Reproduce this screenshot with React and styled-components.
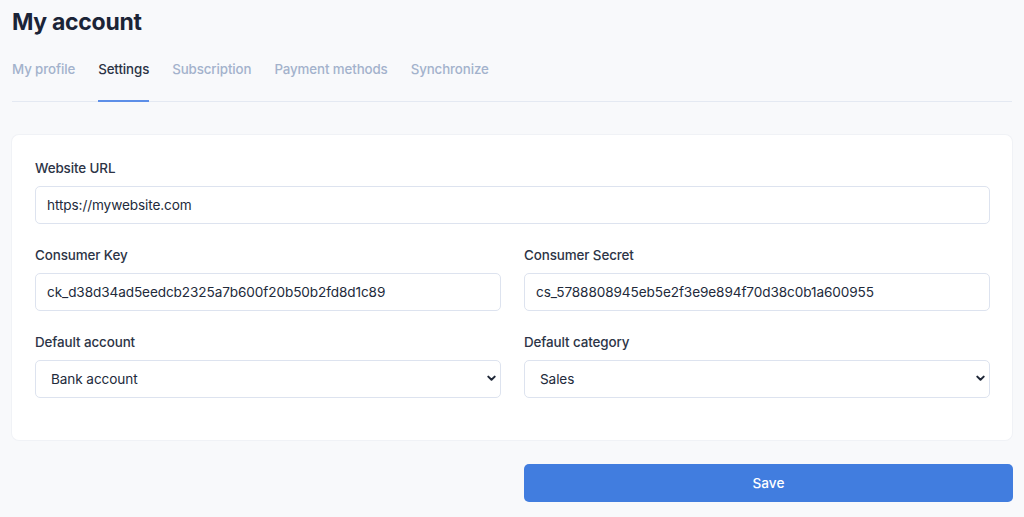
import React from 'react'
import styled, { createGlobalStyle } from 'styled-components'

const GlobalStyle = createGlobalStyle`
  html, body {
    margin: 0;
    padding: 0;
    background: #f8f9fb;
    font-family: Inter, "Noto Sans", sans-serif;
    -webkit-font-smoothing: antialiased;
  }
`;

const Page = styled.div`
  padding: 8px 11px 0 12px;
  display: flex;
  flex-direction: column;
`;

const Title = styled.h1`
  margin: 0;
  font-size: 23px;
  font-weight: 700;
  color: #1b2437;
  letter-spacing: -0.3px;
  line-height: 29px;
`;

const Tabs = styled.nav`
  display: flex;
  gap: 23px;
  margin-top: 17px;
  border-bottom: 1px solid #e4e9f2;
  margin-right: 1px;
`;

const Tab = styled.a`
  font-size: 13.3px;
  font-weight: 500;
  color: ${p => (p.active ? '#2a3245' : '#a3b2cc')};
  padding: 7px 0 23px;
  border-bottom: 2px solid ${p => (p.active ? '#5d8fe8' : 'transparent')};
  margin-bottom: -1px;
  cursor: pointer;
  letter-spacing: -0.1px;
`;

const Card = styled.section`
  margin-top: 33px;
  margin-right: 1px;
  background: #fff;
  border-radius: 7px;
  box-shadow: 0 0 0 1px #f0f2f6;
  padding: 23px 22px 42px 23px;
  display: flex;
  flex-direction: column;
  gap: 21px;
`;

const Row = styled.div`
  display: grid;
  grid-template-columns: ${p => (p.cols === 2 ? '1fr 1fr' : '1fr')};
  column-gap: 23px;
`;

const Field = styled.label`
  display: flex;
  flex-direction: column;
  gap: 8px;
`;

const Label = styled.span`
  font-size: 13.4px;
  font-weight: 500;
  color: #2c3446;
  line-height: 20px;
  letter-spacing: -0.1px;
`;

const Input = styled.input`
  box-sizing: border-box;
  height: 38px;
  border: 1px solid #dde3ef;
  border-radius: 5px;
  padding: 0 11px;
  font-family: inherit;
  font-size: 13.6px;
  color: #222a3b;
  background: #fff;
  outline: none;
  letter-spacing: -0.1px;
`;

const SelectWrap = styled.div`
  position: relative;
`;

const Select = styled.select`
  box-sizing: border-box;
  width: 100%;
  height: 38px;
  border: 1px solid #dde3ef;
  border-radius: 5px;
  padding: 0 15px;
  font-family: inherit;
  font-size: 13.6px;
  color: #222a3b;
  background: #fff;
  appearance: none;
  outline: none;
  letter-spacing: -0.1px;
`;

const Chevron = styled.svg`
  position: absolute;
  right: 5px;
  top: 15px;
  width: 9px;
  height: 7px;
  pointer-events: none;
`;

const Footer = styled.div`
  display: flex;
  justify-content: flex-end;
  padding-top: 24px;
`;

const SaveButton = styled.button`
  width: 489px;
  height: 38px;
  border: none;
  border-radius: 5px;
  background: #417ddf;
  color: #fff;
  font-family: inherit;
  font-size: 13.6px;
  font-weight: 500;
  cursor: pointer;
`;

const Dropdown = ({ value }) => (
  <SelectWrap>
    <Select defaultValue={value}>
      <option>{value}</option>
    </Select>
    <Chevron viewBox="0 0 9 7">
      <path d="M1.3 1.6 L4.5 4.8 L7.7 1.6" fill="none" stroke="#1f2737" strokeWidth="2" strokeLinecap="round" strokeLinejoin="round" />
    </Chevron>
  </SelectWrap>
);

const tabs = ['My profile', 'Settings', 'Subscription', 'Payment methods', 'Synchronize'];

export default function App() {
  return (
    <>
      <GlobalStyle />
      <Page>
        <Title>My account</Title>
        <Tabs>
          {tabs.map(t => (
            <Tab key={t} active={t === 'Settings' ? 1 : 0}>{t}</Tab>
          ))}
        </Tabs>
        <Card>
          <Row>
            <Field>
              <Label>Website URL</Label>
              <Input defaultValue="https://mywebsite.com" />
            </Field>
          </Row>
          <Row cols={2}>
            <Field>
              <Label>Consumer Key</Label>
              <Input defaultValue="ck_d38d34ad5eedcb2325a7b600f20b50b2fd8d1c89" />
            </Field>
            <Field>
              <Label>Consumer Secret</Label>
              <Input defaultValue="cs_5788808945eb5e2f3e9e894f70d38c0b1a600955" />
            </Field>
          </Row>
          <Row cols={2}>
            <Field as="div">
              <Label>Default account</Label>
              <Dropdown value="Bank account" />
            </Field>
            <Field as="div">
              <Label>Default category</Label>
              <Dropdown value="Sales" />
            </Field>
          </Row>
        </Card>
        <Footer>
          <SaveButton>Save</SaveButton>
        </Footer>
      </Page>
    </>
  );
}
